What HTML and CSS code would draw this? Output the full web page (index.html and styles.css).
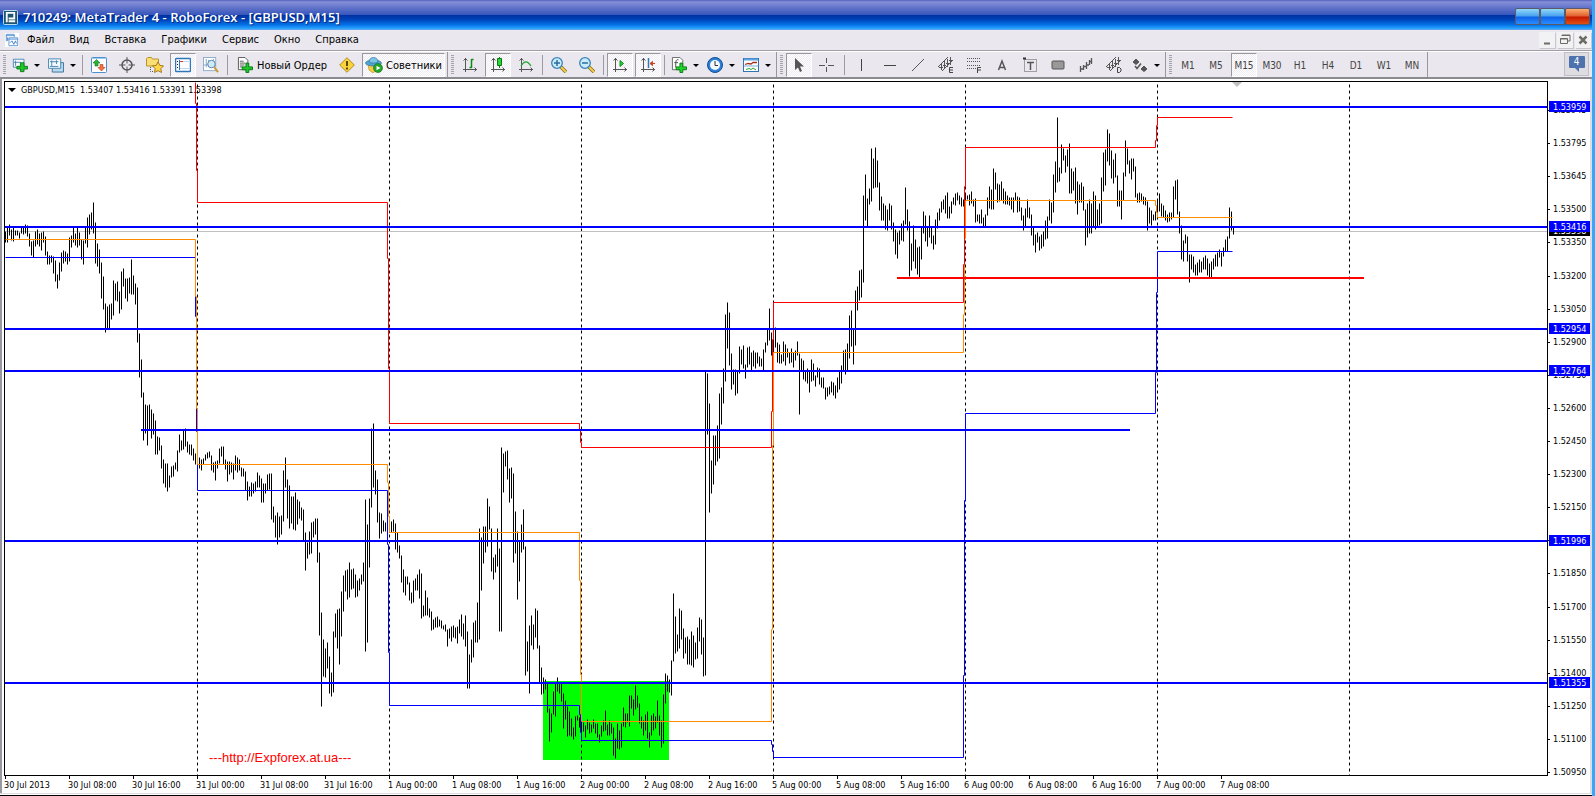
FILE: index.html
```html
<!DOCTYPE html>
<html lang="ru">
<head>
  <meta charset="UTF-8" />
  <title>710249: MetaTrader 4 - RoboForex - [GBPUSD,M15]</title>
  <meta name="viewport" content="width=device-width, initial-scale=1.0" />
  <link rel="stylesheet" href="styles.css">
</head>
<body>

  <header class="titlebar">
    <svg class="logo" viewBox="0 0 16 16"><rect x=".5" y=".5" width="15" height="15" rx="1" fill="#1c5576" stroke="#cfe6f0"/><path d="M4 13V3h8v6H6M6 12h7" fill="none" stroke="#fff" stroke-width="2"/></svg>
    <h1>710249: MetaTrader 4 - RoboForex - [GBPUSD,M15]</h1>
    <div class="window-buttons">
      <button aria-label="Свернуть"></button>
      <button aria-label="Развернуть"></button>
      <button class="close" aria-label="Закрыть"></button>
    </div>
  </header>

  <nav class="menubar">
    <svg class="icon" viewBox="0 0 16 16"><rect width="16" height="16" fill="#fff"/><path d="M1.500 9.500v-8h9v3M1 3h10M4.500 14.500v-9h10v9zM4 7h11" fill="none" stroke="#4f8fd0"/><path d="M6 11l2-2 2 4 2-4 1 3M3 5v4" fill="none" stroke="#3478c0"/></svg>
    <button>Файл</button>
    <button>Вид</button>
    <button>Вставка</button>
    <button>Графики</button>
    <button>Сервис</button>
    <button>Окно</button>
    <button>Справка</button>
    <div class="mdi-buttons">
      <button aria-label="Свернуть окно"><svg viewBox="0 0 16 16"><path d="M5 11.500h6" stroke="#6d6d66" stroke-width="2"/></svg></button>
      <button aria-label="Восстановить окно"><svg viewBox="0 0 16 16"><path d="M5 4V3h8v6h-2M5 3.500h8" fill="none" stroke="#6d6d66"/><path d="M3.500 6.500h7v5h-7zM3 7h8" fill="none" stroke="#6d6d66"/></svg></button>
      <button aria-label="Закрыть окно"><svg viewBox="0 0 16 16"><path d="M4.500 4.500l7 7M11.500 4.500l-7 7" stroke="#6d6d66" stroke-width="2.500"/></svg></button>
    </div>
  </nav>

  <div class="toolbar">
    <div class="group">
      <i class="grip"></i>
      <button class="tool split" aria-label="Новый график"><svg class="icon" viewBox="0 0 18 16"><path d="M1.500 1.500h12v9h-12z" fill="#f4faff" stroke="#4584b0"/><path d="M4 3v6M2 5h8" stroke="#4584b0"/><path d="M9.500 5.500h4v4h4v3h-4v3h-4v-3h-4v-3h4z" fill="#1fc62a" stroke="#087a12"/></svg></button>
      <button class="tool split" aria-label="Профили"><svg class="icon" viewBox="0 0 17 16"><path d="M4.500 5.500h12v10h-12z" fill="#b9d8ee" stroke="#39749d"/><path d="M.500 1.500h13v10h-13z" fill="#f4faff" stroke="#4584b0"/><path d="M4 3v6M2 4.500h9M9 3v4M2 9.500h9" stroke="#4584b0"/></svg></button>
      <i class="sep"></i>
      <button class="tool" aria-label="Обзор рынка"><svg class="icon" viewBox="0 0 16 16"><rect x=".5" y=".5" width="15" height="15" rx="1" fill="#fff" stroke="#4c91cf"/><path d="M1 1.500h14" stroke="#9ccaf0"/><path d="M5.500 2.500L9 6H7v3H4V6H2z" fill="#28b339" stroke="#11751d" stroke-width=".6"/><path d="M10.500 14L7 10.500h2v-3h3v3h2z" fill="#f27445" stroke="#b43b14" stroke-width=".6"/></svg></button>
      <button class="tool" aria-label="Окно данных"><svg class="icon" viewBox="0 0 16 16"><circle cx="8" cy="8" r="5" fill="none" stroke="#555" stroke-width="1.500"/><path d="M8 0v6.500M8 9.500V16M0 8h6.500M9.500 8H16" stroke="#555"/></svg></button>
      <button class="tool" aria-label="Навигатор"><svg class="icon wide" viewBox="0 0 18 16"><path d="M.500 1.500l1-1h4l1 1.500h6v7h-12z" fill="#f9df75" stroke="#b8932c"/><path d="M4.500 10v4.500H8" fill="none" stroke="#555" stroke-dasharray="1 1"/><path d="M12 4.800l1.800 3.600 3.700.5-2.700 2.700.7 3.900-3.500-1.900-3.500 1.900.7-3.900-2.700-2.700 3.700-.5z" fill="#ffd84a" stroke="#a9791a"/></svg></button>
      <button class="tool on" aria-label="Терминал"><svg class="icon" viewBox="0 0 16 14"><rect x=".5" y=".5" width="15" height="13" rx="1" fill="#fff" stroke="#2e77bd" stroke-width="1.500"/><path d="M2 3.500h1M2 6.500h1M2 9.500h1" stroke="#222"/><path d="M5 3.500h9M5 10.500h9" stroke="#bcd9f2"/><path d="M4 3.500h4" stroke="#d33"/><path d="M4.500 2v10" stroke="#2e77bd"/></svg></button>
      <button class="tool" aria-label="Тестер стратегий"><svg class="icon wide" viewBox="0 0 17 17"><rect x=".5" y=".5" width="13" height="14" fill="#fff" stroke="#8aabca"/><path d="M3.500 2v9M1 8.500h12M6 3v4M11 2v3" stroke="#7ba3c8"/><circle cx="9" cy="7.500" r="4" fill="#cfeafa" stroke="#5a7fa5"/><path d="M12 11l4 5" stroke="#c99a2b" stroke-width="2"/></svg></button>
      <i class="sep"></i>
      <button class="tool text"><svg class="icon wide" viewBox="0 0 17 17"><path d="M1.500.500h7l3 3v10h-10z" fill="#fff" stroke="#555"/><path d="M3 4.500h4M3 6.500h6M3 8.500h5M3 10.500h3" stroke="#555"/><path d="M9.500 6.500h3v4h4v3h-4v3h-3v-3h-4v-3h4z" fill="#1fc62a" stroke="#087a12"/></svg>Новый Ордер</button>
      <button class="tool" aria-label="MetaEditor"><svg class="icon" viewBox="0 0 16 16"><path d="M8 .7L15.300 8 8 15.300.7 8z" fill="#f8d33c" stroke="#b38a16"/><path d="M8 4v5M8 10.500v2" stroke="#5d4708" stroke-width="2"/></svg></button>
      <button class="tool text on"><svg class="icon wide" viewBox="0 0 18 16"><path d="M3 7h10l-1 6-4 3-4-3z" fill="#f6c945" stroke="#b18a24" stroke-width=".6"/><ellipse cx="8.500" cy="6" rx="8" ry="3" fill="#4fa6d3" stroke="#2d7199" stroke-width=".7"/><path d="M4 5c0-6 9-6 9 0-2 1.500-7 1.500-9 0z" fill="#7cc4e6" stroke="#2d7199" stroke-width=".7"/><circle cx="13" cy="11" r="4.500" fill="#24a52b" stroke="#0b6b14" stroke-width=".6"/><path d="M11.500 8.700v4.600l4-2.300z" fill="#fff"/></svg>Советники</button>
    </div>

    <div class="group">
      <i class="grip"></i>
      <button class="tool" aria-label="Бары"><svg class="icon" viewBox="0 0 16 16"><path d="M3.500 1v14M1 12.500h14M1.500 3.500l2-2 2 2M12.500 10.500l2 2-2 2" fill="none" stroke="#555"/><path d="M9.500 2v9M9.500 2.500h2M7.500 10.500h2" stroke="#0b8a14" stroke-width="1.500"/></svg></button>
      <button class="tool on" aria-label="Свечи"><svg class="icon" viewBox="0 0 16 16"><path d="M3.500 1v14M1 12.500h14M1.500 3.500l2-2 2 2M12.500 10.500l2 2-2 2" fill="none" stroke="#555"/><path d="M9.500 0v11" stroke="#0b7a14"/><path d="M7.500 1.500h4v7h-4z" fill="#2ed43a" stroke="#0b7a14"/></svg></button>
      <button class="tool" aria-label="Линия"><svg class="icon" viewBox="0 0 16 16"><path d="M3.500 1v14M1 12.500h14M1.500 3.500l2-2 2 2M12.500 10.500l2 2-2 2" fill="none" stroke="#555"/><path d="M3 9c3-5 6-6 10 0" fill="none" stroke="#28a532" stroke-width="1.300"/></svg></button>
      <i class="sep"></i>
      <button class="tool" aria-label="Увеличить"><svg class="icon" viewBox="0 0 16 16"><path d="M10 10l5 5" stroke="#8a6a18" stroke-width="3.500"/><path d="M10 10l5 5" stroke="#f2cf4d" stroke-width="2"/><circle cx="6" cy="6" r="5.300" fill="#c9ecfb" stroke="#3b82b8" stroke-width="1.300"/><path d="M3 6h6M6 3v6" stroke="#2b6c9e" stroke-width="1.500"/></svg></button>
      <button class="tool" aria-label="Уменьшить"><svg class="icon" viewBox="0 0 16 16"><path d="M10 10l5 5" stroke="#8a6a18" stroke-width="3.500"/><path d="M10 10l5 5" stroke="#f2cf4d" stroke-width="2"/><circle cx="6" cy="6" r="5.300" fill="#c9ecfb" stroke="#3b82b8" stroke-width="1.300"/><path d="M3 6h6" stroke="#2b6c9e" stroke-width="1.500"/></svg></button>
      <i class="sep"></i>
      <button class="tool on" aria-label="Автопрокрутка"><svg class="icon" viewBox="0 0 16 16"><path d="M3.500 1v14M1 12.500h14M1.500 3.500l2-2 2 2M12.500 10.500l2 2-2 2" fill="none" stroke="#555"/><path d="M8 3.500v6l3.500-3z" fill="#2ed43a" stroke="#0b8a14"/></svg></button>
      <button class="tool on" aria-label="Сдвиг графика"><svg class="icon" viewBox="0 0 16 16"><path d="M3.500 1v14M1 12.500h14M1.500 3.500l2-2 2 2M12.500 10.500l2 2-2 2" fill="none" stroke="#555"/><path d="M8.500 1v10" stroke="#2b78b5" stroke-width="1.500"/><path d="M15 6.500h-4M12.500 4.500v4l-2.500-2z" fill="#c7401c" stroke="#c7401c"/></svg></button>
      <i class="sep"></i>
      <button class="tool split" aria-label="Индикаторы"><svg class="icon" viewBox="0 0 17 17"><path d="M1.500.500h8l3 3v10h-11z" fill="#fff" stroke="#666"/><path d="M8 3c-3-1-3 2-3 8M3.500 6h4" fill="none" stroke="#444"/><path d="M9.500 6.500h3v4h4v3h-4v3h-3v-3h-4v-3h4z" fill="#1fd62a" stroke="#087a12"/></svg></button>
      <button class="tool split" aria-label="Периоды"><svg class="icon" viewBox="0 0 16 16"><circle cx="8" cy="8" r="7.500" fill="#2b7fd6" stroke="#114f94"/><circle cx="8" cy="8" r="5" fill="#f4f9fd"/><path d="M8 4v4.500h3" fill="none" stroke="#333"/></svg></button>
      <button class="tool split" aria-label="Шаблоны"><svg class="icon" viewBox="0 0 16 14"><rect x=".5" y=".5" width="15" height="13" fill="#fff" stroke="#2f74b5"/><path d="M1 1.500h14" stroke="#5ea3e0" stroke-width="2"/><path d="M2 6.500l3-1 3 .500 2-1.500h4" fill="none" stroke="#a33322" stroke-width="1.300"/><path d="M1 8h14" stroke="#7eaedb"/><path d="M3 11.500l3-1 2 1 2-1.500 3 2" fill="none" stroke="#28a532"/></svg></button>
    </div>

    <div class="group drawing">
      <i class="grip"></i>
      <button class="tool on" aria-label="Курсор"><svg class="icon" viewBox="0 0 16 16"><path d="M4 1v12l3-2.500L9 15l2-1-2-4.500h4z" fill="#555"/></svg></button>
      <button class="tool" aria-label="Перекрестие"><svg class="icon" viewBox="0 0 16 16"><path d="M7.500 1v5M7.500 10v5M0 8.500h6M9 8.500h6" stroke="#555"/></svg></button>
      <i class="sep"></i>
      <button class="tool" aria-label="Вертикальная линия"><svg class="icon" viewBox="0 0 16 16"><path d="M7.500 2v12" stroke="#444"/></svg></button>
      <button class="tool" aria-label="Горизонтальная линия"><svg class="icon" viewBox="0 0 16 16"><path d="M2 8.500h12" stroke="#444"/></svg></button>
      <button class="tool" aria-label="Трендовая линия"><svg class="icon" viewBox="0 0 16 16"><path d="M2 14L14 2" stroke="#555"/></svg></button>
      <button class="tool" aria-label="Канал"><svg class="icon" viewBox="0 0 16 16"><path d="M0 10L10 0M4 14L15 3M3.500 6v7M6.500 4v7M9.500 2v8M12.500 0v8M1 10.500h4M5 8.500h3M8 6.500h3M11 3.500h3" fill="none" stroke="#555"/><path d="M15 10.500h-3.500v5H15M11.500 13H15" fill="none" stroke="#444"/></svg></button>
      <button class="tool" aria-label="Фибоначчи"><svg class="icon" viewBox="0 0 16 16"><path d="M1 1.500h14M1 4.500h14M1 8.500h14M1 11.500h9" stroke="#555" stroke-dasharray="1 1"/><path d="M11.500 16v-5.500H15M11.500 13H15" fill="none" stroke="#444"/></svg></button>
      <button class="tool" aria-label="Текст"><svg class="icon" viewBox="0 0 16 16"><path d="M4.500 13L8 4l3.500 9M6 10.500h4" fill="none" stroke="#555" stroke-width="1.500"/></svg></button>
      <button class="tool" aria-label="Текстовая метка"><svg class="icon" viewBox="0 0 16 16"><rect x="2.500" y="2.500" width="12" height="12" fill="none" stroke="#555" stroke-dasharray="1 1"/><path d="M5 5.500h7M8.500 5v8" stroke="#555" stroke-width="1.500"/><path d="M1 1.500h3" stroke="#333" stroke-width="2"/></svg></button>
      <button class="tool" aria-label="Прямоугольник"><svg class="icon" viewBox="0 0 16 16"><rect x="2" y="4" width="12" height="8" rx="1" fill="#999" stroke="#555"/></svg></button>
      <button class="tool" aria-label="Волны"><svg class="icon" viewBox="0 0 16 16"><path d="M2.500 15v-6M2 12h3.500M5.500 13v-5M5 9.500h3M8.500 12V5M8 8h3M11.500 8V3M11 4.500h3M13.500 7V1" fill="none" stroke="#555" stroke-width="1.300"/></svg></button>
      <button class="tool" aria-label="Отклонение"><svg class="icon" viewBox="0 0 16 16"><path d="M0 10L10 0M4 14L15 3M3.500 6v7M6.500 4v7M9.500 2v8M12.500 0v8M1 10.500h4M5 8.500h3M8 6.500h3M11 3.500h3" fill="none" stroke="#555"/><path d="M11.500 10.500h2l1.500 1.500v2l-1.500 1.500h-2z" fill="none" stroke="#444"/></svg></button>
      <button class="tool split" aria-label="Стрелки"><svg class="icon" viewBox="0 0 16 16"><path d="M4 2l3 3-3 2.500L1 5zM12 9l3 3-3 2.500L9 12z" fill="#555" stroke="#555"/><path d="M3 9l2 2.500 4-5" fill="none" stroke="#555" stroke-width="1.500"/></svg></button>
    </div>

    <div class="group">
      <i class="grip"></i>
      <button class="tool period">M1</button>
      <button class="tool period">M5</button>
      <button class="tool period on">M15</button>
      <button class="tool period">M30</button>
      <button class="tool period">H1</button>
      <button class="tool period">H4</button>
      <button class="tool period">D1</button>
      <button class="tool period">W1</button>
      <button class="tool period">MN</button>
    </div>

    <button class="messages" aria-label="Сообщения"><span>4</span></button>
  </div>

  <main class="chart">
    <section class="plot">
      <svg id="plot"></svg>
      <p class="quote">GBPUSD,M15&nbsp; 1.53407 1.53416 1.53391 1.53398</p>
    </section>
    <svg id="prices"></svg>
    <svg id="times"></svg>
  </main>

  <footer class="status"></footer>

  <script src="script.js"></script>
</body>
</html>
```
FILE: styles.css
```css
* { box-sizing: border-box; margin: 0; padding: 0; }
body {
  display: flex;
  flex-direction: column;
  height: 100vh;
  overflow: hidden;
  background: #eae8ee;
  border-right: 3px solid #35a8fa;
  font-family: "DejaVu Sans Condensed", "DejaVu Sans", sans-serif;
  font-size: 11px;
  color: #000;
}
button {
  border: none;
  background: none;
  font: inherit;
  color: inherit;
}
svg { display: block; }

/* title bar */
.titlebar {
  display: flex;
  align-items: center;
  height: 30px;
  flex: none;
  margin-right: -3px;
  padding: 4px 5px 0 3px;
  background: linear-gradient(#5562c0 0, #8790d8 2px, #6676cc 7px, #3555bb 15px, #0030a0 15px, #0046bc 20px, #0474e8 25px, #30a9ff 29px, #8aa0e0 30px);
}
.logo { width: 15px; height: 15px; }
h1 {
  flex: 1;
  margin-left: 5px;
  font-family: "Open Sans", sans-serif;
  font-size: 13px;
  line-height: 20px;
  font-weight: 600;
  color: #fff;
  text-shadow: 1px 1px 0 #0a2a80;
}
.window-buttons { display: flex; margin-top: -2px; }
.window-buttons button {
  width: 25px;
  height: 17px;
  border: 1px solid #5a5a68;
  border-radius: 2px;
  background: linear-gradient(#8fd8fa 0, #4aa2ee 7px, #0d62e8 8px, #2a8cff 100%);
}
.window-buttons .close { background: linear-gradient(#ffb070 0, #e06030 7px, #c81800 8px, #e05010 100%); }

/* menu */
.menubar {
  display: flex;
  align-items: center;
  height: 21px;
  flex: none;
  padding: 0 1px 0 5px;
  border-bottom: 1px solid #a0a0a4;
  line-height: 16px;
}
.menubar .icon { width: 14px; height: 14px; margin-right: 1px; }
.menubar > button { padding: 0 8px; margin-left: -1px; }
.mdi-buttons { display: flex; gap: 2px; margin-left: auto; }
.mdi-buttons button {
  width: 16px;
  height: 16px;
  background: #f2f1f4;
  box-shadow: 1px 1px 0 #c8c8cc;
}

/* toolbar */
.toolbar {
  display: flex;
  height: 28px;
  flex: none;
  border-top: 1px solid #fff;
  border-bottom: 2px solid #8a8a90;
}
.group {
  display: flex;
  gap: 2px;
  align-items: center;
  padding: 1px 2px 0 3px;
  border-right: 1px solid #98989c;
}
.grip {
  width: 3px;
  height: 20px;
  margin-right: 1px;
  background: repeating-linear-gradient(#a4a4a8 0, #a4a4a8 1px, #eae8ee 1px, #eae8ee 2px);
}
.sep { width: 1px; height: 20px; margin: 0 1px; background: #9c9ca0; }
.drawing .sep { margin: 0 2px; }
.tool {
  display: flex;
  align-items: center;
  justify-content: center;
  width: 26px;
  height: 24px;
}
.tool .icon { width: 16px; height: 16px; flex: none; }
.tool .icon.wide { width: 18px; }
.split {
  width: 34px;
  justify-content: space-between;
  padding: 0 3px;
}
.split::after {
  content: "";
  border: 3px solid transparent;
  border-top-color: #000;
  border-bottom: none;
}
.text { width: auto; gap: 3px; padding: 0 5px; }
.on {
  background: repeating-conic-gradient(#fff 0 25%, #eeecf2 0 50%) 0 0 / 2px 2px;
  border: 1px solid #fff;
  border-top-color: #98989c;
  border-left-color: #98989c;
}
.text.on { padding: 0 2px; }
.period { font-size: 10px; color: #444; }
.messages {
  display: flex;
  align-items: center;
  justify-content: center;
  width: 25px;
  height: 24px;
  margin-left: auto;
  margin-right: 3px;
  border: 1px solid #c0c0c4;
  background: #dedde2;
}
.messages span {
  position: relative;
  width: 16px;
  height: 12px;
  margin-bottom: 4px;
  border-radius: 1px;
  background: #4d72ad;
  color: #fff;
  font-size: 10px;
  line-height: 12px;
}
.messages span::after {
  content: "";
  position: absolute;
  left: 6px;
  top: 12px;
  border-top: 4px solid #4d72ad;
  border-left: 4px solid transparent;
}

/* chart */
.chart {
  flex: 1;
  min-height: 0;
  display: grid;
  grid-template-columns: 1fr 42px;
  grid-template-rows: 1fr 17px;
  padding: 2px 0 0 2px;
  background: #fff;
  border-left: 2px solid #98989e;
  border-right: 2px solid #dcdce2;
  font-size: 9px;
}
.plot {
  position: relative;
  min-height: 0;
  border: 1px solid #000;
}
.chart svg { width: 100%; height: 100%; overflow: hidden; }
#times { grid-column: 1 / 3; }
.quote {
  position: absolute;
  left: 3px;
  top: 2px;
  display: flex;
  align-items: center;
  gap: 5px;
  line-height: 12px;
}
.quote::before {
  content: "";
  border: 4px solid transparent;
  border-top-color: #000;
  border-bottom: none;
}
.bar { fill: none; stroke: #000; }
.day { stroke: #000; stroke-dasharray: 3 3; }
.level { stroke: #0000ff; stroke-width: 2; }
.support { stroke: #ff0000; stroke-width: 2; }
.bid { stroke: #c0c0c0; }
.zone { fill: #00ff00; }
.high, .middle, .low { fill: none; }
.high { stroke: #ff0000; }
.middle { stroke: #ff8c00; }
.low { stroke: #0000ff; }
.shift { fill: #c0c0c0; }
.tag { fill: #0000ff; }
.tag.last { fill: #000; }
.tag-text { fill: #fff; }
.tick { stroke: #000; }
.link {
  font-family: "Liberation Sans", Arial, sans-serif;
  font-size: 13px;
  fill: #ff0000;
}
.status {
  flex: none;
  height: 3px;
  border-top: 1px solid #dcdce2;
  border-bottom: 1px solid #000;
  background: #fff;
}
```
FILE: script.js
```js
// M15 bars, "high-low" in chart pixels, one bar every 2px from the given x
const bars = [
  [5, '231-242 227-242 224-235 229-240 227-241 230-235 230-235 232-238 227-233 227-234 224-233 225-236 233-246 241-255 240-257 231-246'],
  [37, '229-244 233-246 232-250 231-242 236-255 251-264 255-264 255-262 256-273 260-281 274-288 262-280 252-271 250-263 251-261 253-264'],
  [69, '237-261 235-247 227-242 233-245 227-247 232-245 239-259 240-264 227-243 217-247 214-234 212-229 202-233 222-263 243-266 249-273'],
  [101, '262-298 276-309 303-332 306-329 304-329 303-319 280-315 283-300 281-301 291-313 271-309 268-286 278-298 278-301 277-293 259-294'],
  [133, '275-294 283-304 287-342 333-377 359-397 392-440 404-433 405-445 404-430 409-438 413-434 420-454 436-454 437-450 445-468 459-483'],
  [165, '463-487 463-491 475-487 466-477 465-476 462-469 450-471 434-452 440-450 430-449 428-446 441-452 444-454 444-455 448-460 453-464'],
  [197, '457-464 457-468 459-470 458-464 454-460 452-458 451-457 455-470 462-472 461-480 460-468 448-463 446-456 446-464 459-469 461-481'],
  [229, '461-474 462-472 463-479 455-470 457-472 459-470 467-476 468-476 471-490 481-500 486-496 482-496 483-493 481-491 472-487 475-487'],
  [261, '478-502 483-502 483-493 474-490 473-489 473-519 506-522 515-537 512-544 516-537 515-534 470-521 457-487 479-518 485-528 496-523'],
  [293, '496-529 492-530 499-524 501-518 507-520 509-541 532-570 542-558 531-554 522-553 521-537 518-534 518-562 552-635 612-706 639-676'],
  [325, '648-677 642-668 656-693 672-696 631-692 613-637 609-648 608-664 591-636 575-611 570-591 569-599 562-597 569-589 568-588 574-597'],
  [357, '580-596 578-590 574-584 562-581 499-651 524-642 498-567 428-507 423-487 470-494 479-522 512-538 513-533 520-531 522-531 522-531'],
  [389, '525-532 521-532 519-531 523-549 532-552 545-558 555-582 569-592 576-595 576-584 582-600 592-603 580-602 578-590 574-590 569-598'],
  [421, '573-618 605-616 590-615 597-615 608-617 611-630 619-629 617-627 616-627 619-626 620-628 625-629 624-631 629-646 628-638 626-641'],
  [453, '625-637 627-638 626-643 619-633 614-636 623-639 615-646 631-688 654-688 639-662 622-657 620-642 602-642 528-639 537-590 526-563'],
  [485, '526-552 498-546 506-529 528-571 557-579 554-572 528-566 548-631 447-631 453-492 451-466 450-479 468-502 467-498 473-562 511-553'],
  [517, '531-599 541-581 524-552 509-549 546-675 641-671 625-693 615-645 624-649 608-637 610-648 645-683 667-694 677-693 679-689 683-712'],
  [549, '708-741 713-732 691-714 683-716 677-691 683-693 683-701 693-728 700-719 706-736 711-735 718-736 727-739 716-736 715-720 717-727'],
  [581, '717-732 722-731 725-737 719-729 722-733 724-732 719-728 723-733 723-737 734-742 725-736 720-731 710-730 724-735 720-735 723-733'],
  [613, '727-755 738-758 723-748 730-749 723-747 707-726 713-727 713-722 695-726 695-708 699-715 685-709 695-707 703-723 716-728 720-735'],
  [645, '714-730 711-738 732-747 715-735 713-730 716-728 700-722 715-735 720-747 694-743 673-703 675-691 679-692 660-695 593-661 616-653'],
  [677, '634-651 608-648 610-639 628-658 637-653 636-664 639-664 631-665 635-667 642-659 627-658 617-641 619-654 637-676 371-675 373-434'],
  [709, '403-512 460-493 435-484 435-465 425-461 393-458 387-424 368-403 314-381 302-348 312-365 353-389 369-384 369-395 371-393 346-373'],
  [741, '349-364 345-368 364-378 347-367 346-364 352-371 350-366 352-368 352-363 356-366 358-366 349-371 342-352 329-345 308-340 332-355'],
  [773, '339-352 327-347 342-362 344-363 354-363 341-361 344-365 348-357 352-363 348-362 352-367 350-360 341-355 353-414 358-371 360-379'],
  [805, '371-381 368-383 371-392 359-381 363-380 375-386 367-377 368-384 377-387 377-388 387-399 387-396 386-394 381-392 382-395 385-398'],
  [837, '377-392 371-389 365-383 350-371 349-374 343-370 315-358 310-346 329-364 290-345 286-310 270-300 269-297 195-282 174-220 198-227'],
  [869, '188-204 148-201 158-188 147-187 160-187 182-210 196-220 203-220 205-229 209-230 203-220 205-229 222-241 229-254 232-258 230-244'],
  [901, '223-240 220-241 187-224 209-230 221-276 243-270 225-261 239-268 247-274 246-277 227-259 211-233 215-241 227-246 215-237 227-243'],
  [933, '235-249 219-244 212-228 208-220 201-212 199-209 195-213 192-218 206-218 201-213 197-204 193-205 192-200 195-204 197-206 199-206'],
  [965, '194-200 195-199 194-205 191-203 199-206 198-222 214-221 214-223 209-223 217-227 214-227 197-215 186-208 189-209 168-209 172-189'],
  [997, '183-202 184-201 181-200 188-203 191-204 195-204 197-205 197-209 197-212 192-200 196-212 197-211 207-220 215-230 208-227 199-217'],
  [1029, '207-218 214-235 227-245 234-252 232-242 236-250 234-248 231-246 220-239 216-238 199-220 202-223 174-212 161-192 117-182 167-181'],
  [1061, '144-173 148-160 155-172 149-166 143-193 168-193 171-190 167-203 181-214 184-202 182-202 186-210 209-245 203-237 199-233 203-233'],
  [1093, '191-227 195-229 209-227 203-225 177-223 152-191 149-185 129-161 133-165 150-178 159-183 153-177 175-206 190-206 190-219 172-200'],
  [1125, '140-176 148-164 160-173 158-179 158-171 166-197 193-202 192-202 193-201 196-204 197-205 201-230 207-223 210-225 214-220 211-220'],
  [1157, '200-213 193-211 203-216 205-217 210-220 214-222 212-221 212-219 186-217 180-199 179-214 211-233 225-259 240-261 234-243 236-261'],
  [1189, '254-282 254-269 256-272 264-275 262-275 259-272 261-272 257-269 255-269 258-275 263-278 261-277 258-269 254-266 252-266 249-257'],
  [1221, '252-266 247-256 239-251 236-251 207-238 211-230 227-234']
];

const days = [197, 389, 581, 773, 965, 1157, 1349];

const levels = [
  ['1.53959', 107], ['1.53416', 227], ['1.52954', 329],
  ['1.52764', 371], ['1.51996', 541], ['1.51355', 683]
];

const prices = ['1.53945', '1.53795', '1.53645', '1.53500', '1.53350', '1.53200', '1.53050',
  '1.52900', '1.52750', '1.52600', '1.52450', '1.52300', '1.52150', '1.52000', '1.51850',
  '1.51700', '1.51550', '1.51400', '1.51250', '1.51100', '1.50950'];

const times = ['30 Jul 2013', '30 Jul 08:00', '30 Jul 16:00', '31 Jul 00:00', '31 Jul 08:00',
  '31 Jul 16:00', '1 Aug 00:00', '1 Aug 08:00', '1 Aug 16:00', '2 Aug 00:00', '2 Aug 08:00',
  '2 Aug 16:00', '5 Aug 00:00', '5 Aug 08:00', '5 Aug 16:00', '6 Aug 00:00', '6 Aug 08:00',
  '6 Aug 16:00', '7 Aug 00:00', '7 Aug 08:00'];

const high = 'M195 82V103H196V170H197V202H387V258H388V368H389V423H579V430H580V442H581V447H771V411H772V339H773V302H963V264H964V186H965V147H1155V140H1156V125H1157V117H1232';
const middle = 'M5 239H195V296H196V408H197V464H387V482H388V516H389V532H579V580H580V674H581V721H771V629H772V445H773V352H963V314H964V238H965V200H1155V205H1156V212H1157V217H1232';
const low = 'M5 257H195V316H196V431H197V490H387V544H388V652H389V705H579V714H580V732H581V740H771V744H772V751H773V757H963V675H964V500H965V413H1155V372H1156V292H1157V251H1232';

function line(cls, x1, y1, x2, y2) {
  return `<line class="${cls}" x1="${x1}" y1="${y1}" x2="${x2}" y2="${y2}"/>`;
}

function drawPlot() {
  let d = '';
  bars.forEach(([x, row]) => {
    row.split(' ').forEach((bar, i) => {
      const [top, bottom] = bar.split('-');
      d += `M${x + i * 2} ${top}V${bottom}`;
    });
  });

  let out = '<rect class="zone" x="543" y="681" width="126" height="79"/>';
  // half pixel shift keeps 1px lines sharp
  out += '<g transform="translate(.5 .5)">';
  days.forEach(x => out += line('day', x, 84, x, '120%'));
  out += line('bid', 5, 231, '110%', 231);
  out += `<path class="bar" d="${d}"/>`;
  out += `<path class="low" d="${low}"/><path class="middle" d="${middle}"/><path class="high" d="${high}"/></g>`;
  levels.forEach(([, y]) => out += line('level', 5, y, '110%', y));
  out += line('level', 141, 430, 1130, 430);
  out += line('support', 897, 278, 1364, 278);
  out += '<path class="shift" d="M1232 82h10l-5 5z"/>';
  out += '<text class="link" x="209" y="762">---http://Expforex.at.ua---</text>';
  document.getElementById('plot').innerHTML = `<g transform="translate(-5 -82)">${out}</g>`;
}

function drawPrices() {
  let out = '';
  prices.forEach((price, i) => {
    const y = Math.round(29 + i * 33.1);
    out += line('tick', 0, y + .5, 2, y + .5);
    out += `<text x="5" y="${y + 3}">${price}</text>`;
  });
  const tags = [['1.53398', 231, 'last'], ...levels.map(l => [...l, ''])];
  tags.forEach(([price, y, cls]) => {
    out += `<rect class="tag ${cls}" x="1" y="${y - 87}" width="41" height="11"/>`;
    out += `<text class="tag-text" x="5" y="${y - 78}">${price}</text>`;
  });
  document.getElementById('prices').innerHTML = out;
}

function drawTimes() {
  let out = '';
  times.forEach((time, i) => {
    const x = 1 + i * 64;
    out += line('tick', x + .5, 0, x + .5, 3);
    out += `<text x="${x - 1}" y="12">${time}</text>`;
  });
  document.getElementById('times').innerHTML = out;
}

drawPlot();
drawPrices();
drawTimes();
```
